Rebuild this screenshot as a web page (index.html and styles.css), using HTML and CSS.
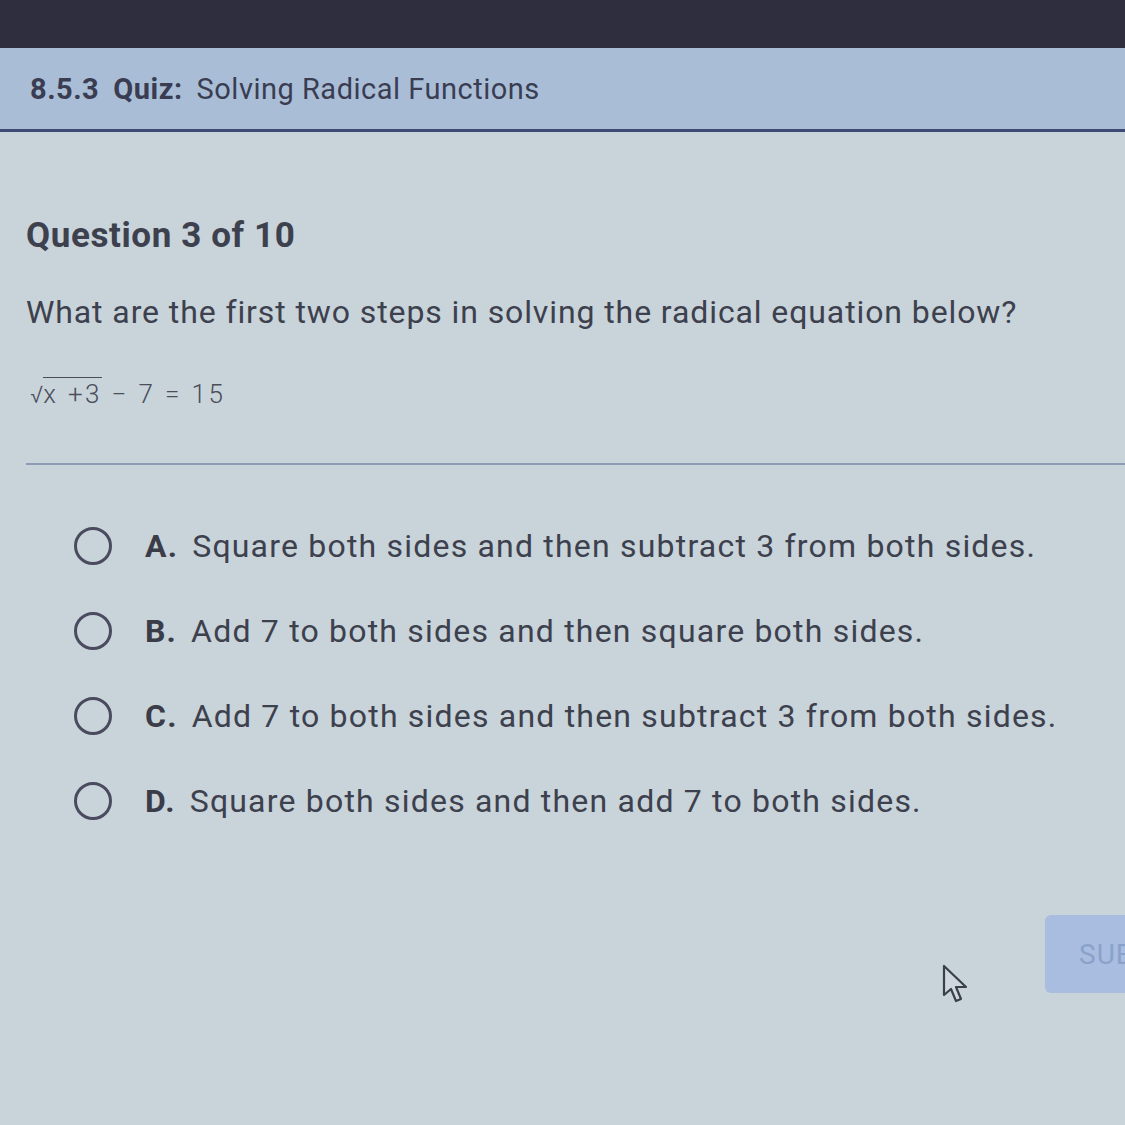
FILE: index.html
```html
<!DOCTYPE html>
<html>
<head>
<meta charset="utf-8">
<link rel="stylesheet" href="styles.css">
</head>
<body>
<div class="topbar"></div>
<header class="header">
  <span class="code">8.5.3</span>
  <span class="quiz">Quiz:</span>
  <span class="title">Solving Radical Functions</span>
</header>
<main class="content">
  <h1 class="qnum">Question 3 of 10</h1>
  <p class="prompt">What are the first two steps in solving the radical equation below?</p>
  <div class="equation"><span class="rad">√</span><span class="radicand">x +3</span> − 7 = 15</div>
  <hr class="sep">
  <ul class="options">
    <li class="option"><span class="radio"></span><span class="letter">A.</span><span class="otext">Square both sides and then subtract 3 from both sides.</span></li>
    <li class="option"><span class="radio"></span><span class="letter">B.</span><span class="otext">Add 7 to both sides and then square both sides.</span></li>
    <li class="option"><span class="radio"></span><span class="letter">C.</span><span class="otext">Add 7 to both sides and then subtract 3 from both sides.</span></li>
    <li class="option"><span class="radio"></span><span class="letter">D.</span><span class="otext">Square both sides and then add 7 to both sides.</span></li>
  </ul>
  <div class="footer">
    <button class="submit">SUBMIT</button>
  </div>
</main>
<svg class="cursor" width="30" height="44" viewBox="0 0 30 44"><path d="M3 2 L3 31 L10 25 L15 37 L20 35 L15 23 L25 23 Z" fill="#cfd8dc" stroke="#3a3f4a" stroke-width="2.2" stroke-linejoin="round"/></svg>
</body>
</html>
```
FILE: styles.css
```css
html, body { margin: 0; padding: 0; }
body {
  width: 1125px;
  height: 1125px;
  overflow: hidden;
  background: #c8d3da;
  font-family: Roboto, "Liberation Sans", sans-serif;
  color: #3c3f4c;
  position: relative;
}
.topbar { height: 48px; background: #2f2e3f; }
.header {
  height: 81px;
  background: #a9bdd7;
  border-bottom: 3px solid #3d4a73;
  display: flex;
  align-items: center;
  padding-left: 30px;
  font-size: 29px;
  letter-spacing: 0.5px;
  color: #3a3d52;
}
.code { font-weight: 700; margin-right: 14px; }
.quiz { font-weight: 700; margin-right: 14px; }
.title { font-weight: 400; }
.content { padding: 0 0 0 26px; }
.qnum {
  margin: 84px 0 0 0;
  font-size: 35px;
  letter-spacing: 0.6px;
  font-weight: 700;
  line-height: 40px;
  color: #3d404d;
}
.prompt {
  margin: 36px 0 0 0;
  font-size: 32px;
  letter-spacing: 0.9px;
  line-height: 40px;
  color: #3d404d;
}
.equation {
  margin: 47px 0 0 4px;
  font-size: 26px;
  font-weight: 300;
  line-height: 30px;
  color: #4a4d5a;
  letter-spacing: 2.4px;
  word-spacing: 1px;
}
.rad { font-size: 24px; letter-spacing: 0; }
.radicand { border-top: 1.5px solid #4a4d5a; padding-top: 1px; }
.sep {
  margin: 53px 0 0 0;
  border: 0;
  border-top: 2px solid #8d9cb3;
  height: 0;
}
.options { list-style: none; margin: 38px 0 0 0; padding: 0 0 0 48px; }
.option {
  display: flex;
  align-items: center;
  height: 85px;
  font-size: 32px;
  letter-spacing: 1.2px;
  color: #3d404d;
}
.radio {
  width: 38px; height: 38px;
  border: 3.5px solid #4a4b5e;
  border-radius: 50%;
  box-sizing: border-box;
  margin-right: 33px;
  flex: none;
}
.letter { font-weight: 700; margin-right: 14px; color: #3a3c48; }
.footer { display: flex; justify-content: flex-end; margin-top: 72px; }
.submit {
  width: 200px; height: 78px;
  margin-right: -120px;
  background: #a9bde0;
  border: 0;
  border-radius: 6px;
  color: #8aa2ca;
  font-family: Roboto, "Liberation Sans", sans-serif;
  font-size: 28px;
  letter-spacing: 1px;
  text-align: left;
  padding-left: 34px;
  white-space: nowrap;
}
.cursor { position: absolute; left: 941px; top: 964px; }
```
